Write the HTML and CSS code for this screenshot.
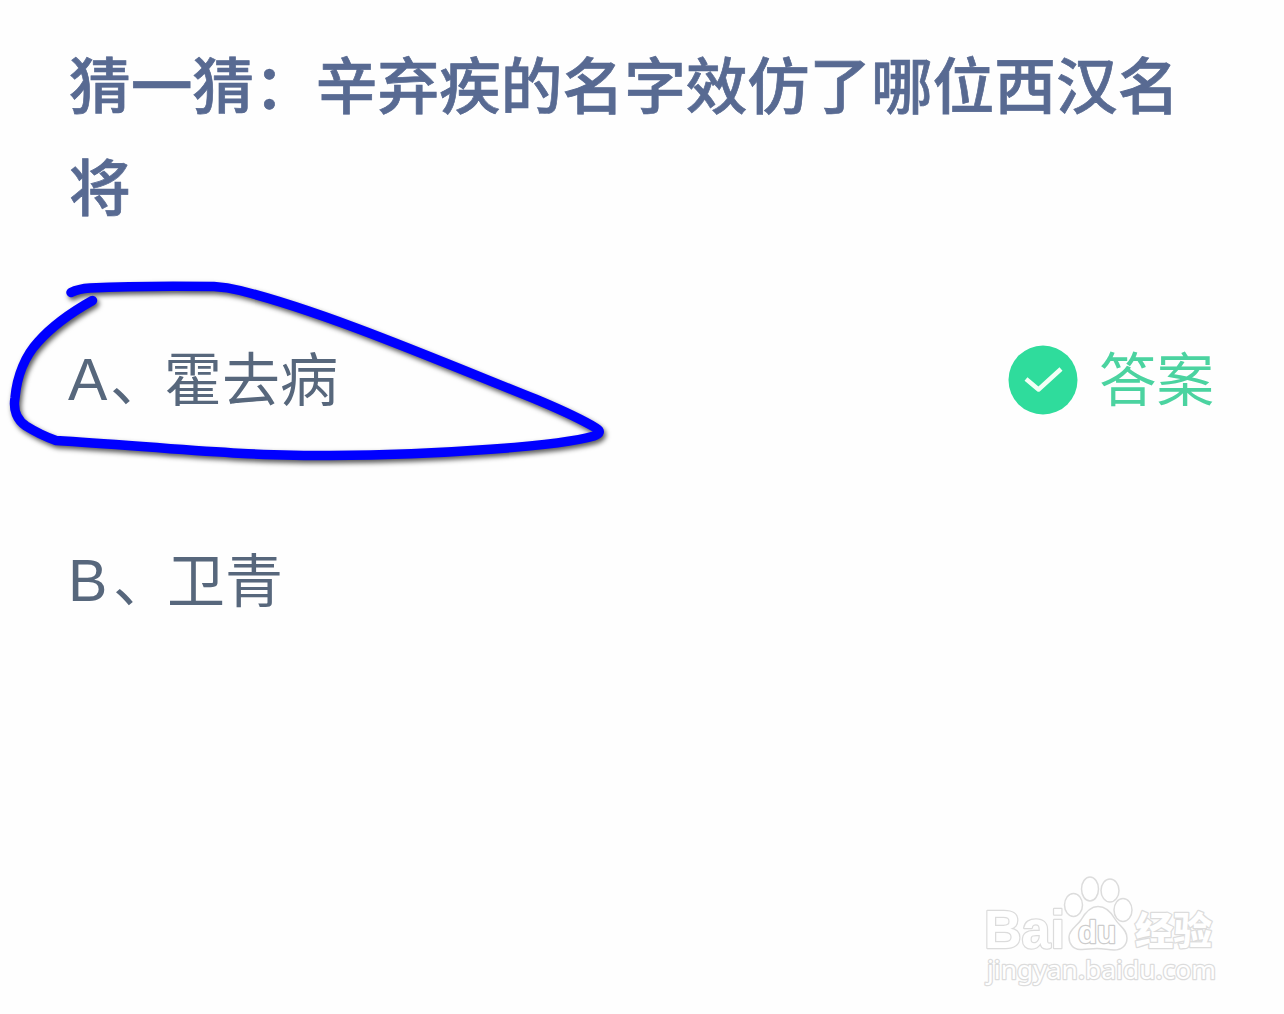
FILE: index.html
```
<!doctype html>
<html lang="zh-CN">
  <head>
    <meta charset="utf-8">
    <title>猜一猜</title>
    <link rel="stylesheet" href="styles.css">
  </head>
  <body>
    <div class="quiz">
      <h1 class="question">猜一猜：辛弃疾的名字效仿了哪位西汉名将</h1>
      <div class="option">
        <span class="label"><span class="letter">A</span><span class="comma">、</span>霍去病</span>
        <span class="answer">
          <svg class="check" viewBox="0 0 70 70">
            <circle cx="35" cy="35" r="34.500" fill="#2fdc9c"/>
            <path d="M18 34L30.500 44.500L53 24" fill="none" stroke="#f1fff5" stroke-width="4.500" stroke-linejoin="round"/>
          </svg>
          答案
        </span>
      </div>
      <div class="option">
        <span class="label"><span class="letter b">B</span><span class="comma">、</span>卫青</span>
      </div>
    </div>

    <!-- hand drawn ring round the right option -->
    <svg class="ring" viewBox="0 0 640 500">
      <path d="M71 292.500C76 290 82 288.500 90 288C130 286 180 286 214 286.500C222 287 228 287.500 240 290.500C325 312 430 357 540 401C566 412 586 422 596 428C601 431 600 434 594 436C560 446 440 455 330 455.500C230 456 150 446 56 440.500C46 437 34 431 26 426C17 420 13 410 15 398C17 375 26 355 38 342C54 324 72 312 92.500 300.500"/>
    </svg>

    <svg class="watermark" viewBox="0 0 250 130">
      <g class="logo">
        <text class="bai" x="4" y="78" textLength="81" lengthAdjust="spacingAndGlyphs">Bai</text>
        <ellipse cx="93.500" cy="35" rx="9" ry="11.500"/>
        <ellipse cx="110" cy="19" rx="8.500" ry="12"/>
        <ellipse cx="130" cy="20.500" rx="9" ry="11.500"/>
        <ellipse cx="143" cy="40" rx="9" ry="11.500"/>
        <path d="M118 36.500C126 36.500 131 42 135 49C139 56 147 59 147 68C147 76 141 80 134 80C128 80 124 78.500 117 78.500C110 78.500 106 80 100 79.500C93 79 89 74 89 67C89 60 97 56 101 50C105 43 110 36.500 118 36.500Z"/>
        <text class="du" x="98" y="73" textLength="38" lengthAdjust="spacingAndGlyphs">du</text>
        <text class="jy" x="155" y="74" textLength="77" lengthAdjust="spacingAndGlyphs">经验</text>
      </g>
      <text class="site" x="7" y="109" textLength="229" lengthAdjust="spacingAndGlyphs">jingyan.baidu.com</text>
    </svg>
  </body>
</html>
```
FILE: styles.css
```
body {
  margin: 0;
  height: 1014px;
  overflow: hidden;
  background: #fefefe;
  font-family: "Noto Sans CJK SC", sans-serif;
}

.quiz {
  padding: 31px 68px 0;
}

.question {
  margin: 0 -5px 0 1px;
  font-size: 61.700px;
  line-height: 102px;
  font-weight: 500;
  color: #586a92;
  -webkit-text-stroke: 0.700px #586a92;
}

.option {
  display: flex;
  justify-content: space-between;
  align-items: center;
  height: 100px;
  margin-top: 91px;
  font-size: 58px;
  line-height: 100px;
  color: #57677c;
}

.option + .option {
  margin-top: 101px;
}

.label {
  display: flex;
}

.letter {
  width: 42px;
  height: 93px;
  padding-top: 7px;
  font-family: "Liberation Sans", sans-serif;
  font-size: 59px;
  line-height: 95px;
}

.letter.b {
  width: 45px;
}

.comma {
  width: 54px;
}

.answer {
  display: flex;
  align-items: center;
  gap: 21px;
  margin-right: 2px;
  color: #4bd3a0;
  font-size: 57.500px;
}

.check {
  width: 70px;
  height: 70px;
  margin-top: 8px;
}

.ring {
  position: absolute;
  left: 0;
  top: 0;
  width: 640px;
  height: 500px;
  fill: none;
  stroke: #00f;
  stroke-width: 9.500px;
  stroke-linecap: round;
  stroke-linejoin: round;
  filter: drop-shadow(2px 3px 2.500px rgba(0, 0, 0, 0.65));
}

.watermark {
  position: absolute;
  left: 980px;
  top: 870px;
  width: 250px;
  height: 130px;
  fill: #fff;
  stroke: #dcdcdc;
}

.watermark text {
  paint-order: stroke;
  stroke-width: 2.500px;
  stroke-linejoin: round;
}

.logo {
  stroke-width: 1.500px;
}

.bai {
  font: bold 53px "Liberation Sans", sans-serif;
}

.watermark .du {
  font: bold 31px "Liberation Sans", sans-serif;
  stroke: #ccc;
}

.jy {
  font: 900 38px "Noto Sans CJK SC", sans-serif;
}

.site {
  font: 26px "Noto Sans", sans-serif;
}
```
